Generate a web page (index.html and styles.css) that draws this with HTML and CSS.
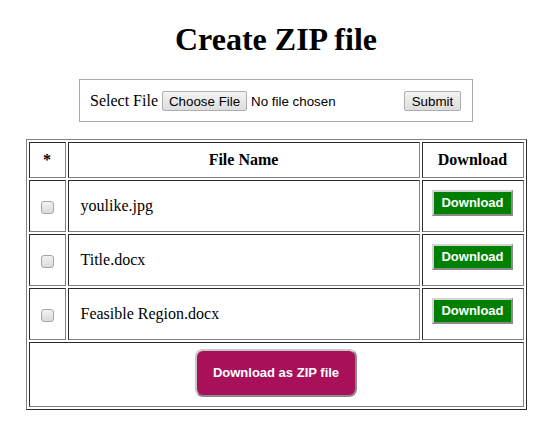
FILE: index.html
```html
<!DOCTYPE html>
<html>
<head>
<meta charset="utf-8">
<title>Create ZIP file</title>
<link rel="stylesheet" href="styles.css">
</head>
<body>
<h1 class="title">Create ZIP file</h1>
<form class="upload">
<span class="upload-label">Select File</span> <input class="file-input" type="file"> <input class="submit-btn" type="submit" value="Submit">
</form>
<table class="files">
<thead>
<tr>
<th class="col-check">*</th>
<th class="col-name">File Name</th>
<th class="col-dl">Download</th>
</tr>
</thead>
<tbody>
<tr>
<td class="cell-check"><input type="checkbox" class="check"></td>
<td class="cell-name">youlike.jpg</td>
<td class="cell-dl"><button class="dl-btn" type="button">Download</button></td>
</tr>
<tr>
<td class="cell-check"><input type="checkbox" class="check"></td>
<td class="cell-name">Title.docx</td>
<td class="cell-dl"><button class="dl-btn" type="button">Download</button></td>
</tr>
<tr>
<td class="cell-check"><input type="checkbox" class="check"></td>
<td class="cell-name">Feasible Region.docx</td>
<td class="cell-dl"><button class="dl-btn" type="button">Download</button></td>
</tr>
<tr>
<td class="cell-zip" colspan="3"><button class="zip-btn" type="button">Download as ZIP file</button></td>
</tr>
</tbody>
</table>
</body>
</html>
```

FILE: styles.css
```css
body {
  margin: 8px;
  font-family: "Liberation Serif", "Times New Roman", serif;
  font-size: 16px;
  color: #000;
  background: #fff;
}

.title {
  font-size: 32px;
  font-weight: bold;
  text-align: center;
  margin: 13px 0 21px;
}

.upload {
  width: fit-content;
  margin: 0 auto 17px;
  padding: 10px 11px 10px 10px;
  border: 1px solid #a9a9a9;
  line-height: 20px;
}

.upload-label {
  vertical-align: middle;
}

.file-input {
  width: 238px;
  font-family: "Liberation Sans", Arial, sans-serif;
  font-size: 13.33px;
  color: #000;
  vertical-align: middle;
  margin: 0;
}

.file-input::file-selector-button {
  font-family: "Liberation Sans", Arial, sans-serif;
  font-size: 13.33px;
  height: 20px;
  padding: 0 6px;
  margin: 0 4px 0 0;
  border: 1px solid #adadad;
  border-radius: 2px;
  background: linear-gradient(#f4f4f4, #dddddd);
  color: #000;
}

.submit-btn {
  font-family: "Liberation Sans", Arial, sans-serif;
  font-size: 13.33px;
  height: 20px;
  width: 57px;
  padding: 0 6px;
  margin: 0;
  border: 1px solid #adadad;
  border-radius: 2px;
  background: linear-gradient(#f4f4f4, #dddddd);
  color: #000;
  vertical-align: middle;
}

.files {
  width: 501px;
  margin: 0 auto;
  border: 1px outset gray;
  border-spacing: 2px;
  table-layout: fixed;
}

.files th,
.files td {
  box-sizing: border-box;
  border: 1px inset gray;
  padding: 0 12px;
}

.files th {
  height: 36px;
  text-align: center;
  font-weight: bold;
}

.col-check {
  width: 37px;
}

.col-dl {
  width: 102px;
}

.files td {
  height: 52px;
  vertical-align: middle;
}

.cell-check {
  text-align: center;
  padding: 0 !important;
}

.check {
  appearance: none;
  -webkit-appearance: none;
  box-sizing: border-box;
  margin: 0;
  width: 13px;
  height: 13px;
  border: 1px solid #a6a6a6;
  border-radius: 3px;
  background: linear-gradient(#f2f2f2, #dadada);
  vertical-align: middle;
}

.cell-dl {
  text-align: center;
  padding: 0 !important;
}

.dl-btn {
  box-sizing: border-box;
  width: 81px;
  height: 26px;
  font-family: "Liberation Sans", Arial, sans-serif;
  font-size: 13px;
  font-weight: bold;
  line-height: 14px;
  color: #fff;
  background: #008000;
  border: 2px solid;
  border-color: #d4d4d4 #8a8a8a #8a8a8a #d4d4d4;
  padding: 0;
  margin: 0 0 6px;
  vertical-align: middle;
}

.files td.cell-zip {
  height: 65px;
  text-align: center;
}

.zip-btn {
  box-sizing: border-box;
  width: 162px;
  height: 48px;
  font-family: "Liberation Sans", Arial, sans-serif;
  font-size: 13px;
  font-weight: bold;
  line-height: 16px;
  color: #fff;
  background: #a8115a;
  border: 2px solid;
  border-color: #c8c8c8 #8a8a8a #8a8a8a #c8c8c8;
  border-radius: 8px;
  padding: 0;
  margin: 0 0 4px;
  vertical-align: middle;
}
```
